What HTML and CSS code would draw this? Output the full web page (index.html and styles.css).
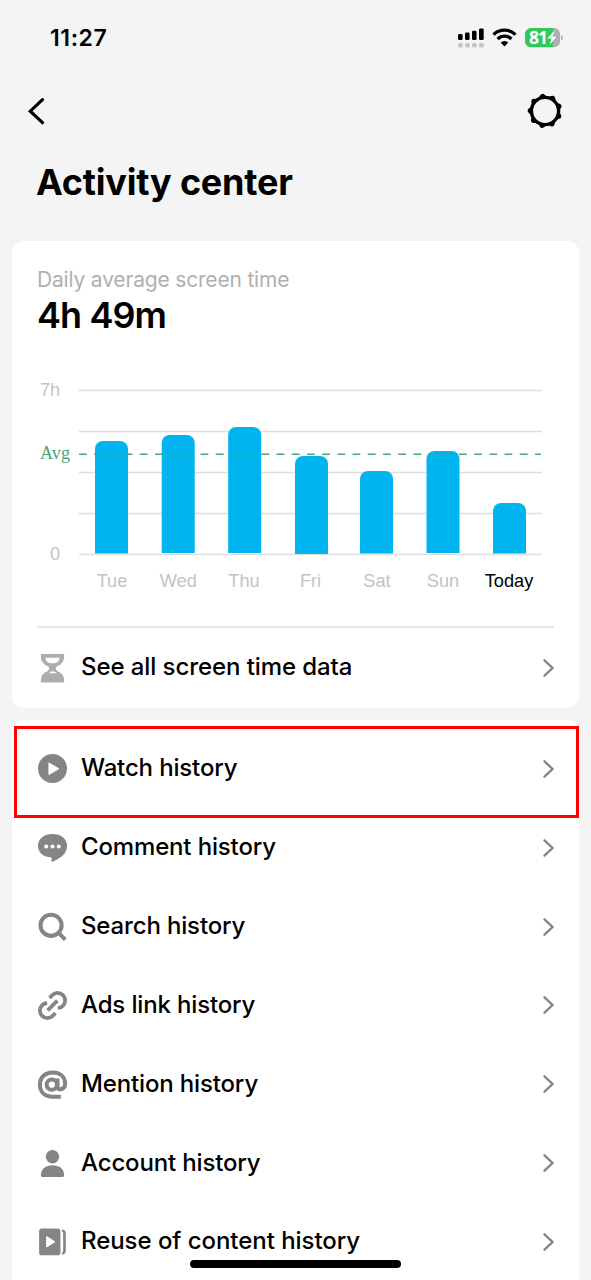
FILE: index.html
```html
<!DOCTYPE html>
<html lang="en">
<head>
<meta charset="utf-8">
<title>Activity center</title>
<link rel="stylesheet" href="styles.css">
</head>
<body>
<div class="screen">
  <header class="status">
    <span class="clock">11:27</span>
    <svg class="status-icons" width="108" height="26" viewBox="456 25 108 26">
      <g fill="#c4c4c4"><rect x="458" y="43" width="4.800" height="4.400" rx="1.5"/><rect x="465" y="43" width="4.800" height="4.400" rx="1.5"/><rect x="472" y="43" width="4.800" height="4.400" rx="1.5"/><rect x="479" y="43" width="4.800" height="4.400" rx="1.5"/></g>
      <g fill="#000"><rect x="458" y="34" width="4.600" height="6" rx="1.300"/><rect x="465" y="32.600" width="4.600" height="7.400" rx="1.300"/><rect x="472" y="30.800" width="4.600" height="9.200" rx="1.300"/><rect x="479" y="28.500" width="4.700" height="11.500" rx="1.300"/></g>
      <g fill="none" stroke="#000" stroke-width="3.300"><path d="M493.500 34.700a15.600 15.600 0 0 1 22 0"/><path d="M497.600 39a9.700 9.700 0 0 1 13.800 0"/></g>
      <path d="M500.700 42.600a5.400 5.400 0 0 1 7.600 0L504.500 46.400z"/>
      <path d="M531 28h22v19.300h-22a6 6 0 0 1-6-6V34a6 6 0 0 1 6-6z" fill="#34c759"/>
      <path d="M553 28h1a6 6 0 0 1 6 6v7.300a6 6 0 0 1-6 6h-1z" fill="#aeaeae"/>
      <path d="M561 35c2.400.6 2.400 5 0 5.600z" fill="#aeaeae"/>
      <text class="battery-text" x="529" y="44">81</text>
      <path d="M554.500 30.500l-7.300 8h4.200l-1.900 6.500 7-8.300h-4z" fill="#fff"/>
    </svg>
  </header>
  <nav class="nav">
    <svg width="20" height="30" viewBox="26 96 20 30"><path d="M42.500 99.700L30.300 111.200 42.500 122.700" fill="none" stroke="#000" stroke-width="3.200" stroke-linecap="round"/></svg>
    <svg class="gear" width="40" height="40" viewBox="-20 -20 40 40">
      <circle r="13.600" fill="none" stroke="#000" stroke-width="3.400"/>
      <g transform="rotate(-9)">
        <path id="tooth" d="M-4.200-13.500L-2.200-16.200Q0-18.600 2.200-16.200L4.200-13.500z"/>
        <use href="#tooth" transform="rotate(40)"/><use href="#tooth" transform="rotate(80)"/><use href="#tooth" transform="rotate(120)"/><use href="#tooth" transform="rotate(160)"/><use href="#tooth" transform="rotate(200)"/><use href="#tooth" transform="rotate(240)"/><use href="#tooth" transform="rotate(280)"/><use href="#tooth" transform="rotate(320)"/>
      </g>
    </svg>
  </nav>
  <h1 class="title">Activity center</h1>

  <section class="card summary">
    <p class="caption">Daily average screen time</p>
    <p class="total">4h 49m</p>
    <svg class="chart" width="517" height="226" viewBox="37 374 517 226">
      <g stroke="#dedede" stroke-width="1.400"><path d="M79 390.500H542M79 431.500H542M79 472.500H542M79 513.500H542M79 554.500H542"/></g>
      <path d="M79 454.300H541" stroke="#4ba57c" stroke-width="1.500" stroke-dasharray="7.800 7.400"/>
      <g fill="#00b4ef">
        <path d="M95 553.500V449a8 8 0 0 1 8-8h17a8 8 0 0 1 8 8V553.500z"/>
        <path d="M161.700 553V443a8 8 0 0 1 8-8h17a8 8 0 0 1 8 8V553z"/>
        <path d="M228.200 553V435a8 8 0 0 1 8-8h17a8 8 0 0 1 8 8V553z"/>
        <path d="M295 554V464a8 8 0 0 1 8-8h17a8 8 0 0 1 8 8V554z"/>
        <path d="M360 553.500V479a8 8 0 0 1 8-8h17a8 8 0 0 1 8 8V553.500z"/>
        <path d="M426.500 553V459a8 8 0 0 1 8-8h17a8 8 0 0 1 8 8V553z"/>
        <path d="M493 553.500V511a8 8 0 0 1 8-8h17a8 8 0 0 1 8 8V553.500z"/>
      </g>
      <g stroke="#2ba9b4" stroke-opacity=".7" stroke-width="1.500" stroke-dasharray="7.800 7.400"><path d="M95 454.300H128" stroke-dashoffset="16"/><path d="M161.700 454.300H194.700" stroke-dashoffset="82.700"/><path d="M228.200 454.300H261.200" stroke-dashoffset="149.200"/><path d="M426.500 454.300H459.500" stroke-dashoffset="347.500"/></g>
      <g class="axis"><text x="40" y="396">7h</text><text x="50" y="560">0</text></g>
      <text class="avg" x="40" y="458.500">Avg</text>
      <g class="axis days"><text x="112" y="587">Tue</text><text x="178.300" y="587">Wed</text><text x="244" y="587">Thu</text><text x="310.500" y="587">Fri</text><text x="377" y="587">Sat</text><text x="443" y="587">Sun</text><text class="today" x="509" y="587">Today</text></g>
    </svg>
    <div class="row all-data">
      <svg class="icon" viewBox="0 0 32 32"><path class="hourglass" fill-rule="evenodd" d="M4 1h24v3q0 6.500-7 9.500l-1.500 1.500v2l1.500 1.500q7 3 7 9.500v2.500h-24V28q0-6.500 7-9.500l1.500-1.500v-2l-1.500-1.500q-7-3-7-9.500zM8.500 5q.5 4 4.500 5.700h6Q23 9 23.500 5zM12 21h8.500q-4.500-4.200-8.500 0z"/></svg>
      <span class="label see">See all screen time data</span>
      <svg class="chevron" viewBox="0 0 11 18"><path d="M1.500 1.300L9.500 9 1.500 16.700"/></svg>
    </div>
  </section>

  <section class="card history">
    <div class="row watch">
      <svg class="icon" viewBox="0 0 32 32"><circle cx="16" cy="16" r="15"/><path d="M12.300 10.200v12l10.200-6z" fill="#fff" stroke="#fff" stroke-linejoin="round"/></svg>
      <span class="label">Watch history</span><svg class="chevron" viewBox="0 0 11 18"><path d="M1.500 1.300L9.500 9 1.500 16.700"/></svg>
      <div class="highlight"></div>
    </div>
    <div class="row">
      <svg class="icon" viewBox="0 0 32 32"><path d="M16 2C7.500 2 1 6.800 1 14.300S7 26 15 26.300v3.700q0 1 1 .700C25.500 27 31 21.500 31 14.300 31 6.800 24.500 2 16 2z"/><g fill="#fff"><circle cx="9.500" cy="15" r="2.100"/><circle cx="16" cy="15" r="2.100"/><circle cx="22.500" cy="15" r="2.100"/></g></svg>
      <span class="label">Comment history</span><svg class="chevron" viewBox="0 0 11 18"><path d="M1.500 1.300L9.500 9 1.500 16.700"/></svg>
    </div>
    <div class="row">
      <svg class="icon" viewBox="0 0 32 32"><g fill="none" stroke="#858585" stroke-width="4.200"><circle cx="14.500" cy="14.800" r="10.900"/><path d="M22 22.300L29.200 29.500"/></g></svg>
      <span class="label">Search history</span><svg class="chevron" viewBox="0 0 11 18"><path d="M1.500 1.300L9.500 9 1.500 16.700"/></svg>
    </div>
    <div class="row">
      <svg class="icon" viewBox="0 0 32 32"><g fill="none" stroke="#858585" stroke-width="3.900"><path d="M13 8.200L15.800 5.300A7.700 7.700 0 0 1 26.800 16.200Q25 18.300 21.500 18.800"/><path d="M19 23.800L16.200 26.700A7.700 7.700 0 0 1 5.200 15.800Q7 13.700 10.500 13.200"/><path d="M11 21L21 11"/></g></svg>
      <span class="label">Ads link history</span><svg class="chevron" viewBox="0 0 11 18"><path d="M1.500 1.300L9.500 9 1.500 16.700"/></svg>
    </div>
    <div class="row">
      <svg class="icon" viewBox="0 0 32 32"><g fill="none" stroke="#858585" stroke-width="4.200"><circle cx="15.300" cy="16.200" r="5.300"/><path d="M21.200 9.800v8q0 3.200 2.700 3.200c3 0 5.100-2 5.100-5.700C29 7.800 23.500 3.700 16.200 3.700 8.500 3.700 3 8.400 3 16c0 8 5.400 12.600 13.400 12.600h8.300"/></g></svg>
      <span class="label">Mention history</span><svg class="chevron" viewBox="0 0 11 18"><path d="M1.500 1.300L9.500 9 1.500 16.700"/></svg>
    </div>
    <div class="row">
      <svg class="icon" viewBox="0 0 32 32"><circle cx="16" cy="9" r="6.900"/><path d="M4 28C4 21.500 9 17.800 16 17.800S28 21.500 28 28q0 2-1.900 2H5.900Q4 30 4 28z"/></svg>
      <span class="label">Account history</span><svg class="chevron" viewBox="0 0 11 18"><path d="M1.500 1.300L9.500 9 1.500 16.700"/></svg>
    </div>
    <div class="row">
      <svg class="icon" viewBox="0 0 32 32"><rect x="2.200" y="2.500" width="22" height="27.800" rx="3"/><path d="M25.700 3.500q4 .3 4 4v18q0 3.700-4 4v-2q1.300-.5 1.300-2v-18q0-1.500-1.300-2z"/><path d="M10 10.900v10.800l8.500-5.400z" fill="#fff" stroke="#fff" stroke-linejoin="round"/></svg>
      <span class="label reuse">Reuse of content history</span><svg class="chevron" viewBox="0 0 11 18"><path d="M1.500 1.300L9.500 9 1.500 16.700"/></svg>
    </div>
  </section>
  <div class="home-bar"></div>
</div>
</body>
</html>
```

FILE: styles.css
```css
* { box-sizing: border-box; }
body { margin: 0; background: #f4f4f4; color: #000; font-family: Inter, "Liberation Sans", sans-serif; }
svg { display: block; flex: none; }
.screen { position: relative; width: 591px; height: 1280px; overflow: hidden; }
.status { display: flex; justify-content: space-between; align-items: center; height: 76px; padding: 0 27px 0 50px; }
.clock { font-size: 23px; font-weight: 600; letter-spacing: 0.600px; }
.battery-text { font: 700 17.500px "Open Sans", sans-serif; letter-spacing: -1px; fill: #fff; }
.nav { display: flex; justify-content: space-between; align-items: center; height: 70px; padding: 0 26px; }
.title { margin: 0; height: 95px; padding: 14px 36px 0; font-size: 36px; line-height: 44px; font-weight: 700; letter-spacing: -0.200px; }
.card { width: 566.500px; margin-left: 12px; background: #fff; }
.summary { height: 467px; padding: 24px 25px 0; border-radius: 12px; }
.caption { margin: 0; font-size: 21px; line-height: 30px; color: #b0b0b0; letter-spacing: -0.180px; }
.total { margin: 0; height: 79px; font-size: 36px; line-height: 40px; font-weight: 600; letter-spacing: -0.900px; }
.axis { font: 18.200px "Liberation Sans", sans-serif; fill: #c3c3c3; }
.days { text-anchor: middle; }
.today { fill: #000; }
.avg { font: 18.200px "Liberation Serif", serif; fill: #4ba57c; }
.row { position: relative; display: flex; align-items: center; height: 78.850px; }
.icon { width: 31px; height: 31px; fill: #858585; }
.hourglass { fill: #adadad; }
.label { flex: 1; margin-left: 13px; font-size: 24px; line-height: 30px; font-weight: 500; letter-spacing: -0.150px; padding-bottom: 2px; white-space: nowrap; }
.see { letter-spacing: -0.080px; padding-bottom: 3px; }
.reuse { letter-spacing: -0.050px; }
.chevron { width: 11px; height: 18px; margin-bottom: 1px; fill: none; stroke: #858585; stroke-width: 2.300; stroke-linecap: round; }
.all-data { height: 82px; margin-top: 26px; border-top: 2px solid #e5e5e5; }
.all-data .chevron { margin-bottom: 0; }
.history { height: 580px; margin-top: 12px; padding: 10px 25px 0; border-radius: 12px; }
.history .icon { margin-bottom: 1px; }
.highlight { position: absolute; left: -23px; top: -4px; width: 565px; height: 92px; border: 3px solid #f00; }
.home-bar { position: absolute; left: 190px; top: 1260px; width: 211px; height: 8px; border-radius: 4px; background: #000; }
```
